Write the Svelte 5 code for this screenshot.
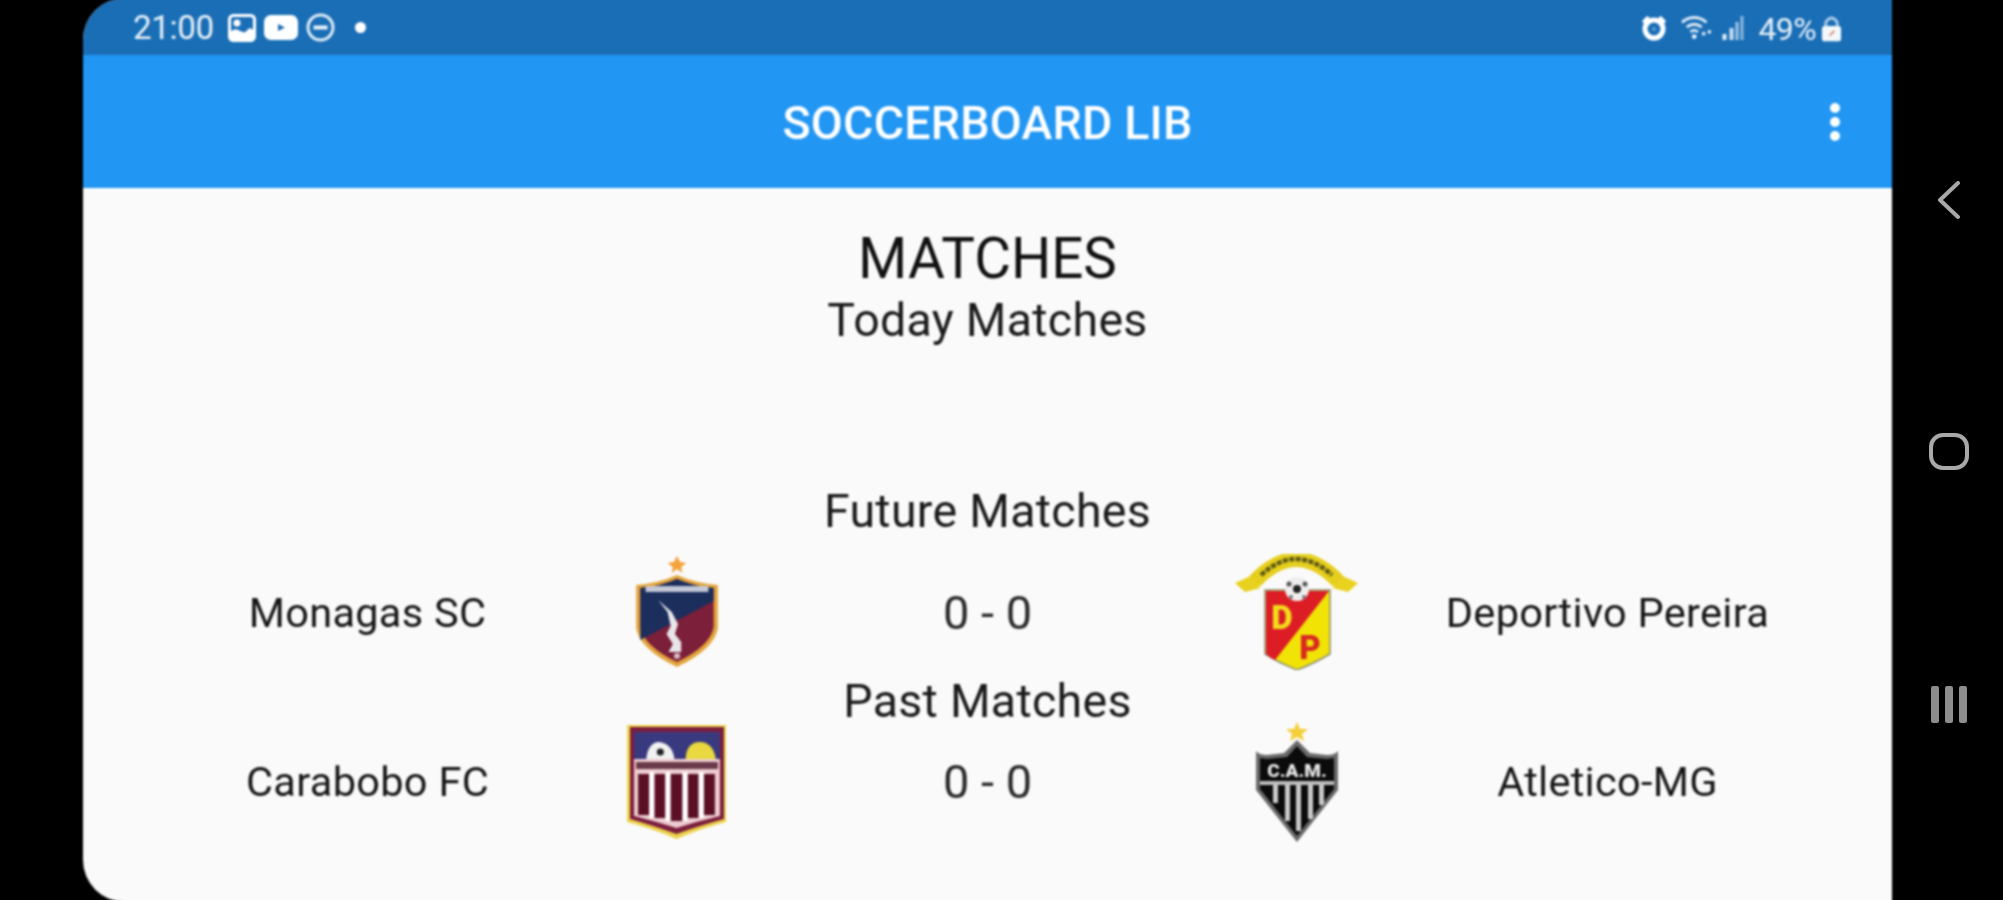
<script>
  const matches = {
    future: { home: 'Monagas SC', away: 'Deportivo Pereira' },
    past: { home: 'Carabobo FC', away: 'Atletico-MG' }
  };
</script>

<div class="device">
  <div class="screen">
    <div class="status">
      <div class="status-left">
        <span class="time">21:00</span>
        <svg class="i-img" viewBox="0 0 28 28"><rect x="1.5" y="1.5" width="25" height="25" rx="4" fill="none" stroke="#fff" stroke-width="3"/><circle cx="9" cy="9" r="3.5" fill="#fff"/><path d="M2 23 L2 18 Q7 13 12 17 Q18 20 20 15 Q23 13 26 17 L26 25 L3 26Z" fill="#fff"/></svg>
        <svg class="i-yt" viewBox="0 0 34 25"><rect width="34" height="25" rx="7" fill="#fff"/><path d="M14 9 L21 12.5 L14 16Z" fill="#1b6db3"/></svg>
        <svg class="i-dnd" viewBox="0 0 29 29"><circle cx="14.5" cy="14.5" r="12.5" fill="none" stroke="#dcebf6" stroke-width="3"/><rect x="7.5" y="12.5" width="14" height="4" fill="#e8f1f8"/></svg>
        <span class="dot"></span>
      </div>
      <div class="status-right">
        <svg class="i-alarm" viewBox="0 0 26 26"><circle cx="13" cy="14" r="9" fill="none" stroke="#fff" stroke-width="5"/><path d="M1 6 L6 1 L9 3 L3 9Z M25 6 L20 1 L17 3 L23 9Z" fill="#fff"/><circle cx="13" cy="14" r="2" fill="#5d9bcf"/></svg>
        <svg class="i-wifi" viewBox="0 0 38 26"><path d="M2 7 Q15 -3 28 7 M7 12 Q15 6 23 12 M11 17 Q15 14 19 17" fill="none" stroke="#dbe9f5" stroke-width="3"/><circle cx="15" cy="22" r="2.5" fill="#eef5fb"/><circle cx="25" cy="19" r="2" fill="#dbe9f5"/><circle cx="31" cy="17" r="2" fill="#dbe9f5"/></svg>
        <svg class="i-sig" viewBox="0 0 23 25"><path d="M1 19h4v6H1z" fill="#e4eff8"/><path d="M8 13h4v12H8z" fill="#c9def0"/><path d="M14 7h3v18h-3z" fill="#a5c7e4"/><path d="M19 1h3v24h-3z" fill="#8fb9dc"/></svg>
        <span class="batt">49%</span>
        <svg class="i-lock" viewBox="0 0 22 28"><path d="M5 13 V8 Q11 -1 17 8 V13" fill="none" stroke="#a9cbe6" stroke-width="3"/><rect x="1" y="12" width="20" height="16" rx="3" fill="#f4f8fb"/><path d="M9 22 L14 17" stroke="#d98a75" stroke-width="2"/></svg>
      </div>
    </div>

    <header class="appbar">
      <h1>SOCCERBOARD LIB</h1>
      <div class="kebab"><i></i><i></i><i></i></div>
    </header>

    <main>
      <h2>MATCHES</h2>
      <h3 class="today">Today Matches</h3>
      <h3 class="future">Future Matches</h3>

      <div class="row row1">
        <span class="name">{matches.future.home}</span>
        <svg class="logo monagas" viewBox="0 0 84 112" preserveAspectRatio="none">
          <path d="M42 0 L45 6 L51 7 L46 11 L47 17 L42 13 L37 17 L38 11 L33 7 L39 6Z" fill="#f3a23a"/>
          <path d="M3 29 Q25 27 42 19 Q59 27 81 29 L81 72 Q78 93 42 111 Q6 93 3 72Z" fill="#e3a53c"/>
          <path d="M7 32 Q27 30 42 23 Q57 30 77 32 L77 71 Q74 90 42 106 Q10 90 7 71Z" fill="#7c1f3a"/>
          <path d="M7 32 Q27 30 42 23 Q57 30 77 32 L77 45 L7 84Z" fill="#1b2e5c"/>
          <rect x="12" y="30" width="60" height="6" fill="#c3c8d6"/>
          <path d="M24 44 L33 56 L36 70 L32 78 L38 88 L34 96 L46 96 L46 86 L40 78 L43 68 L37 56Z" fill="#e9e6ea"/>
          <circle cx="42" cy="100" r="3" fill="#d7b9bf"/>
        </svg>
        <span class="score">0 - 0</span>
        <svg class="logo pereira" viewBox="0 0 127 116">
          <path d="M2 29 L22 20 L27 34 L12 38Z M125 29 L105 20 L100 34 L115 38Z" fill="#e9d21d"/>
          <path d="M22 27 Q63 -16 105 27" fill="none" stroke="#e6cf1c" stroke-width="15"/>
          <path d="M28 21 Q63 -11 99 21" fill="none" stroke="#5f5a17" stroke-width="4.5" stroke-dasharray="5 1.5"/>
          <path d="M32 36 L97 36 L97 100 Q80 110 64 116 Q48 110 32 100Z" fill="#f1e305" stroke="#8c8f7c" stroke-width="1.5"/>
          <path d="M33 37 L96 37 L42 106 Q37 104 33 100Z" fill="#dd1d26"/>
          <text x="49" y="75" class="dp red-bg">D</text>
          <text x="77" y="105" class="dp yellow-bg">P</text>
          <circle cx="64" cy="35" r="12" fill="#eee"/>
          <circle cx="64" cy="35" r="4" fill="#222"/>
          <circle cx="56" cy="30" r="2.5" fill="#555"/><circle cx="72" cy="30" r="2.5" fill="#555"/><circle cx="58" cy="43" r="2" fill="#777"/><circle cx="71" cy="43" r="2" fill="#777"/>
        </svg>
        <span class="name">{matches.future.away}</span>
      </div>

      <h3 class="past">Past Matches</h3>

      <div class="row row2">
        <span class="name">{matches.past.home}</span>
        <svg class="logo carabobo" viewBox="0 0 100 116" preserveAspectRatio="none">
          <path d="M1 1 L99 1 L99 98 Q75 104 50 115 Q25 104 1 98Z" fill="#ecd24a"/>
          <path d="M4 3 L97 3 L97 95 Q75 101 50 110 Q25 101 4 95Z" fill="#7c1e3e"/>
          <rect x="8" y="8" width="85" height="27" fill="#39397f"/>
          <path d="M20 35 Q22 18 33 18 Q46 20 48 35Z" fill="#f1f1f1"/>
          <circle cx="34" cy="28" r="3.5" fill="#222"/>
          <path d="M59 35 Q60 18 73 18 Q86 18 89 35Z" fill="#e9d83f"/>
          <path d="M8 35 L93 35 L93 92 Q72 97 50 104 Q28 97 8 92Z" fill="#eccbd0"/>
          <rect x="10" y="38" width="81" height="7" fill="#6a3a4a"/>
          <g fill="#5a0f25">
            <rect x="12" y="50" width="11" height="41"/>
            <rect x="28" y="50" width="11" height="44"/>
            <rect x="44" y="50" width="12" height="47"/>
            <rect x="61" y="50" width="11" height="44"/>
            <rect x="77" y="50" width="11" height="41"/>
          </g>
          <g fill="#fff">
            <rect x="23" y="48" width="5" height="46"/>
            <rect x="39" y="48" width="5" height="49"/>
            <rect x="56" y="48" width="5" height="49"/>
            <rect x="72" y="48" width="5" height="46"/>
          </g>
        </svg>
        <span class="score">0 - 0</span>
        <svg class="logo atletico" viewBox="0 0 88 120">
          <path d="M44 0 L47 7 L55 7 L49 12 L51 19 L44 15 L37 19 L39 12 L33 7 L41 7Z" fill="#f5cf3a"/>
          <path d="M44 18 L57 31 L74 33 Q82 33 85 29 L85 68 L44 120 L3 68 L3 29 Q6 33 14 33 L31 31Z" fill="#6a6a6a"/>
          <path d="M44 24 L54 35 L74 37 L81 36 L81 67 L44 114 L7 67 L7 36 L14 37 L34 35Z" fill="#0b0b0b"/>
          <text x="44" y="55" class="cam">C.A.M.</text>
          <path d="M7 59 L81 59 L81 63 L7 63Z" fill="#bdbdbd"/>
          <g fill="#c9c9c9">
            <rect x="20" y="63" width="5" height="18"/>
            <rect x="32" y="63" width="5" height="36"/>
            <rect x="43" y="63" width="5" height="46"/>
            <rect x="55" y="63" width="5" height="34"/>
            <rect x="66" y="63" width="5" height="20"/>
          </g>
        </svg>
        <span class="name">{matches.past.away}</span>
      </div>
    </main>
  </div>

  <nav class="softkeys">
    <svg class="k-back" viewBox="0 0 25 40"><path d="M22 3 L4 20 L22 37" fill="none" stroke="#a8a8a8" stroke-width="4" stroke-linecap="round" stroke-linejoin="round"/></svg>
    <span class="k-home"></span>
    <div class="k-recent"><i></i><i></i><i></i></div>
  </nav>
</div>

<style>
  :global(body) { margin: 0; background: #000; }
  .device {
    width: 2003px; height: 900px; background: #000; overflow: hidden;
    display: flex; padding-left: 83px; box-sizing: border-box;
    font-family: Roboto, "Liberation Sans", sans-serif;
  }
  .screen {
    width: 1809px; height: 904px; margin-top: -2px; background: #fafafa; overflow: hidden; flex: none;
    display: flex; flex-direction: column;
    border-radius: 42px 0 0 42px;
    filter: blur(0.8px);
  }
  .status {
    height: 57px; background: #1a6eb6; flex: none; color: #e6f0f8;
    display: flex; justify-content: space-between; align-items: center;
    padding: 2px 50px 0 50px; box-sizing: border-box;
  }
  .status-left, .status-right { display: flex; align-items: center; }
  .time { font-size: 33px; margin-right: 14px; line-height: 1; letter-spacing: -0.3px; }
  .i-img { width: 28px; height: 28px; margin-right: 8px; }
  .i-yt { width: 34px; height: 25px; margin-right: 8px; }
  .i-dnd { width: 29px; height: 29px; margin-right: 20px; }
  .dot { width: 11px; height: 11px; border-radius: 50%; background: #fff; }
  .i-alarm { width: 26px; height: 26px; margin-right: 13px; }
  .i-wifi { width: 36px; height: 26px; margin-right: 5px; }
  .i-sig { width: 24px; height: 25px; margin-right: 13px; }
  .batt { font-size: 32px; line-height: 1; margin-right: 5px; letter-spacing: -0.6px; position: relative; top: 1px; }
  .i-lock { width: 21px; height: 28px; }
  .appbar {
    height: 133px; background: #2196f3; flex: none; position: relative;
    display: flex; align-items: center; justify-content: center;
  }
  h1 { margin: 0; font-size: 46.5px; font-weight: 500; color: #fff; letter-spacing: 0.2px; line-height: 1; position: relative; top: 2px; }
  .kebab {
    position: absolute; right: 52px; top: 48px;
    display: flex; flex-direction: column; gap: 4px;
  }
  .kebab i { width: 10px; height: 10px; border-radius: 50%; background: #fff; display: block; }
  main { flex: 1; display: flex; flex-direction: column; align-items: center; color: #111; }
  h2 { margin: 39px 0 0; font-size: 56.5px; font-weight: 400; line-height: 64px; color: #111; }
  h3 { margin: 0; font-size: 46.5px; font-weight: 400; line-height: 52px; color: #1a1a1a; letter-spacing: 0.3px; }
  .today { margin-top: 3px; }
  .future { margin-top: 139px; margin-bottom: 6px; }
  .past { line-height: 40px; }
  .row {
    width: 1550px; display: grid; grid-template-columns: repeat(5, 310px);
    align-items: center; justify-items: center;
  }
  .row1 { height: 138px; }
  .row2 { height: 121px; }
  .name { font-size: 41.5px; color: #161616; letter-spacing: 0.3px; white-space: nowrap; }
  .score { font-size: 47px; color: #2a2a2a; }
  .logo { display: block; filter: blur(0.7px); }
  .monagas { width: 88px; height: 112px; margin-left: -2px; }
  .pereira { width: 127px; height: 116px; margin-left: -2px; }
  .carabobo { width: 101px; height: 116px; margin-left: -2px; }
  .atletico { width: 88px; height: 120px; margin-left: -2px; }
  .dp { font-family: Roboto, sans-serif; font-weight: 900; font-size: 33px; text-anchor: middle; }
  .red-bg { fill: #f1dc1a; }
  .yellow-bg { fill: #d92a22; }
  .cam { font-family: Roboto, sans-serif; font-weight: 900; font-size: 19px; fill: #e8e8e8; text-anchor: middle; }
  .softkeys {
    width: 111px; flex: none; display: flex; flex-direction: column; align-items: center;
    padding: 180px 0 0 2px; box-sizing: border-box; filter: blur(0.6px);
  }
  .k-back { width: 25px; height: 40px; flex: none; }
  .k-home {
    width: 40px; height: 37px; box-sizing: border-box; margin-top: 213px; flex: none;
    border: 4px solid #a8a8a8; border-radius: 14px;
  }
  .k-recent { margin-top: 216px; display: flex; gap: 6px; }
  .k-recent i { width: 8px; height: 37px; background: #8d8d8d; display: block; border-radius: 2px; }
</style>
